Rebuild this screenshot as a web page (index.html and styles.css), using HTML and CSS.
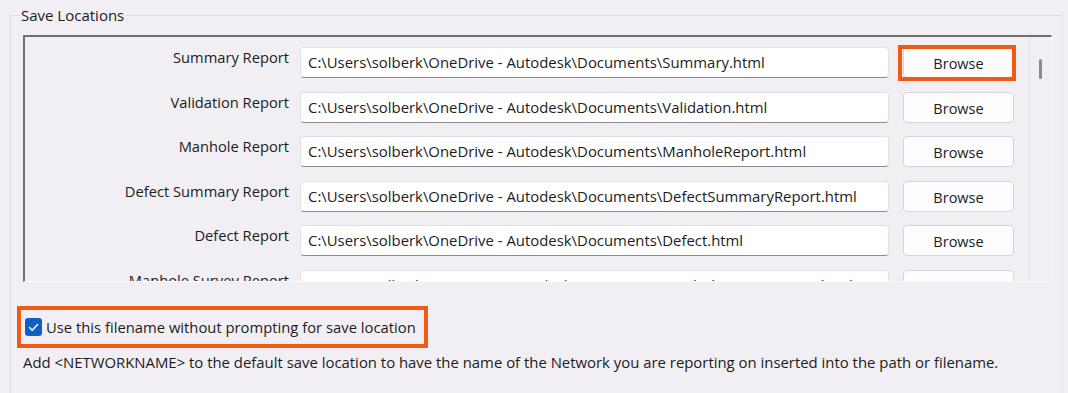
FILE: index.html
```html
<!DOCTYPE html>
<html lang="en">
<head>
    <meta charset="UTF-8">
    <title>Save Locations</title>
    <link rel="stylesheet" href="styles.css">
</head>
<body>
    <fieldset class="group">
        <legend>Save Locations</legend>
        <div class="panel">
            <div class="rows">
                <label>Summary Report</label>
                <div class="field">C:\Users\solberk\OneDrive - Autodesk\Documents\Summary.html</div>
                <div class="browse-wrap highlight"><button>Browse</button></div>

                <label>Validation Report</label>
                <div class="field">C:\Users\solberk\OneDrive - Autodesk\Documents\Validation.html</div>
                <div class="browse-wrap"><button>Browse</button></div>

                <label>Manhole Report</label>
                <div class="field">C:\Users\solberk\OneDrive - Autodesk\Documents\ManholeReport.html</div>
                <div class="browse-wrap"><button>Browse</button></div>

                <label>Defect Summary Report</label>
                <div class="field">C:\Users\solberk\OneDrive - Autodesk\Documents\DefectSummaryReport.html</div>
                <div class="browse-wrap"><button>Browse</button></div>

                <label>Defect Report</label>
                <div class="field">C:\Users\solberk\OneDrive - Autodesk\Documents\Defect.html</div>
                <div class="browse-wrap"><button>Browse</button></div>

                <label>Manhole Survey Report</label>
                <div class="field">C:\Users\solberk\OneDrive - Autodesk\Documents\ManholeSurveyReport.html</div>
                <div class="browse-wrap"><button>Browse</button></div>
            </div>
            <div class="scrollbar"><div class="thumb"></div></div>
        </div>

        <div class="option highlight">
            <span class="checkbox">
                <svg width="11" height="9" viewBox="0 0 11 9"><path d="M1.5 4.6 L4.2 7.2 L9.6 1.6" fill="none" stroke="#fff" stroke-width="1.4" stroke-linecap="round" stroke-linejoin="round"/></svg>
            </span>
            <span>Use this filename without prompting for save location</span>
        </div>
        <p class="hint">Add &lt;NETWORKNAME&gt; to the default save location to have the name of the Network you are reporting on inserted into the path or filename.</p>
    </fieldset>
</body>
</html>
```

FILE: styles.css
```css
:root {
    --bg: #f1eff3;
    --text: #1c1c1c;
    --orange: #f05a12;
    --field-border: #e2e0e4;
}

* {
    box-sizing: border-box;
}

body {
    margin: 0;
    background: var(--bg);
    font-family: 'Open Sans', 'Noto Sans', sans-serif;
    font-size: 14.5px;
    color: var(--text);
    overflow: hidden;
}

.group {
    margin: 8px 0 0 10px;
    width: 1053px;
    height: 420px;
    padding: 0 0 0 12px;
    border: 1px solid #dddbe0;
    border-right-color: #e6e4e8;
}

.group legend {
    padding: 0 1px;
    margin-left: -3px;
    font-size: 15px;
    line-height: 14px;
}

.panel {
    display: flex;
    width: 1029px;
    height: 247px;
    margin-top: 13px;
    border-top: 2px solid #707070;
    border-left: 2px solid #707070;
    border-right: 1px solid #fbfbfb;
    border-bottom: 1px solid #fbfbfb;
    overflow: hidden;
}

.rows {
    flex: 1;
    display: grid;
    grid-template-columns: 264px 589px 111px;
    grid-auto-rows: 31px;
    column-gap: 11px;
    row-gap: 13.5px;
    padding: 10px 0 0 0;
    align-content: start;
}

.rows label {
    justify-self: end;
    align-self: start;
    font-size: 14.7px;
    line-height: 20px;
}

.field {
    background: #fff;
    border: 1px solid var(--field-border);
    border-bottom: 1px solid #8c8c8c;
    border-radius: 4px;
    padding: 0 7px;
    font-size: 14.9px;
    line-height: 29px;
    white-space: nowrap;
    overflow: hidden;
}

.browse-wrap {
    position: relative;
    margin-left: 3px;
}

.browse-wrap button {
    width: 111px;
    height: 31px;
    background: #fdfdfd;
    border: 1px solid #d6d4d8;
    border-radius: 4px;
    font-family: inherit;
    font-size: 14.5px;
    color: var(--text);
    padding: 2px 0 0 0;
}

.browse-wrap.highlight::after {
    content: "";
    position: absolute;
    left: -5px;
    top: -2px;
    right: -5px;
    bottom: -3px;
    border: 4px solid var(--orange);
}

.scrollbar {
    width: 22px;
    flex: none;
    border-left: 1px solid #e4e2e6;
    position: relative;
}

.thumb {
    position: absolute;
    left: 9px;
    top: 22px;
    width: 3px;
    height: 20px;
    border-radius: 2px;
    background: #8a8a8a;
}

.option {
    display: inline-flex;
    align-items: center;
    gap: 4px;
    margin: 24px 0 0 -6px;
    padding: 7px 8px 7px 4px;
    border: 4px solid var(--orange);
    font-size: 14.8px;
}

.checkbox {
    width: 17px;
    height: 18px;
    border-radius: 3px;
    background: #1060c4;
    display: flex;
    align-items: center;
    justify-content: center;
}

.hint {
    margin: 4px 0 0 0;
    font-size: 14.9px;
}
```
